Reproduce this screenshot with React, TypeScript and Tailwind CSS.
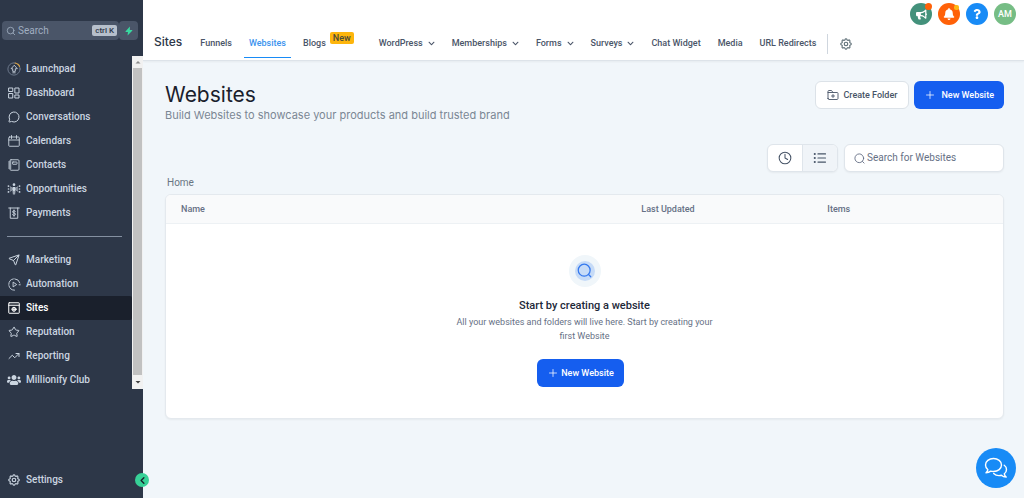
import type { ReactNode } from "react";
import {
  ChevronLeft,
  MessageCircle,
  Plus,
  Search,
  Send,
  Star,
  TrendingUp,
} from "lucide-react";
import { FaBell, FaBullhorn, FaChevronDown, FaQuestion, FaUsers } from "react-icons/fa";
import { HiOutlineCog } from "react-icons/hi";

type SideItem = {
  label: string;
  icon: ReactNode;
  active?: boolean;
};

type TopItem = {
  label: string;
  menu?: boolean;
  active?: boolean;
  badge?: string;
};

const lineIcon = {
  viewBox: "0 0 24 24",
  fill: "none",
  stroke: "currentColor",
  strokeLinecap: "round",
  strokeLinejoin: "round",
} as const;

const primaryItems: SideItem[] = [
  { label: "Launchpad", icon: <LaunchpadIcon /> },
  { label: "Dashboard", icon: <DashboardIcon /> },
  {
    label: "Conversations",
    icon: <MessageCircle className="size-3" strokeWidth={2} />,
  },
  { label: "Calendars", icon: <CalendarIcon /> },
  { label: "Contacts", icon: <ContactsIcon /> },
  { label: "Opportunities", icon: <OpportunitiesIcon /> },
  { label: "Payments", icon: <PaymentsIcon /> },
];

const secondaryItems: SideItem[] = [
  { label: "Marketing", icon: <Send className="size-3" strokeWidth={2} /> },
  { label: "Automation", icon: <AutomationIcon /> },
  { label: "Sites", icon: <SitesIcon />, active: true },
  { label: "Reputation", icon: <Star className="size-3" strokeWidth={2} /> },
  { label: "Reporting", icon: <TrendingUp className="size-3" strokeWidth={2} /> },
  { label: "Millionify Club", icon: <FaUsers className="size-[14px]" /> },
];

const topItems: TopItem[] = [
  { label: "Funnels" },
  { label: "Websites", active: true },
  { label: "Blogs", badge: "New" },
  { label: "WordPress", menu: true },
  { label: "Memberships", menu: true },
  { label: "Forms", menu: true },
  { label: "Surveys", menu: true },
  { label: "Chat Widget" },
  { label: "Media" },
  { label: "URL Redirects" },
];

export default function App() {
  return (
    <div className="flex min-h-screen bg-[#f1f6fa] font-['Roboto',sans-serif] text-[9px] leading-[14px]">
      <Sidebar />
      <div className="flex min-w-0 flex-1 flex-col">
        <Header />
        <WebsitesPage />
      </div>
      <button
        type="button"
        aria-label="Open chat"
        className="fixed right-2 bottom-[10px] flex size-10 items-center justify-center rounded-full bg-[#188bf6] text-white"
      >
        <ChatIcon />
      </button>
    </div>
  );
}

function Sidebar() {
  return (
    <aside className="relative flex w-[143px] shrink-0 flex-col bg-[#2d3748] text-[#cbd5e0]">
      <div className="flex pt-[21px] pr-[5px] pl-[2px]">
        <label className="flex h-[19px] min-w-0 flex-1 items-center gap-[2px] rounded-sm bg-[#4a5568] pr-[2px] pl-1">
          <Search className="size-[10px] shrink-0 text-[#a0aec0]" />
          <input
            type="text"
            placeholder="Search"
            aria-label="Search"
            className="w-full min-w-0 bg-transparent text-[10px] outline-none placeholder:text-[#a0aec0]"
          />
          <kbd className="shrink-0 rounded-xs bg-[#b6bfcb] px-[3px] font-['Roboto',sans-serif] text-[8px] leading-[11px] font-medium text-[#2d3748]">
            ctrl K
          </kbd>
        </label>
        <button
          type="button"
          aria-label="Quick actions"
          className="flex h-[19px] w-[19px] items-center justify-center rounded-sm bg-[#4a5568] text-[#38d9a0]"
        >
          <svg viewBox="0 0 10 12" className="h-[10px] w-2" fill="currentColor">
            <path d="M6.2 0.5 0.8 6.4c-.4.4-.1.9.4.9h2.5l-.5 4.2 5.8-5.8c.4-.4.1-1-.4-1H6l.2-4.2Z" />
          </svg>
        </button>
      </div>

      <div className="mt-4 flex">
        <nav aria-label="Main" className="min-w-0 flex-1 pt-px">
          <SideList items={primaryItems} />
          <hr className="mt-[11px] mr-[10px] mb-[11px] ml-[7px] border-[#8490a1]" />
          <SideList items={secondaryItems} />
        </nav>
        <ScrollBar />
      </div>

      <a href="#settings" className="mt-auto mb-1 flex h-7 items-center gap-[5px] pl-[7px] text-[10px] font-medium">
        <HiOutlineCog className="size-[14px]" />
        Settings
      </a>
      <button
        type="button"
        aria-label="Collapse sidebar"
        className="absolute right-[-6px] bottom-[11px] flex size-[14px] items-center justify-center rounded-full bg-[#37d197] text-[#1a202c]"
      >
        <ChevronLeft className="size-[11px]" strokeWidth={3} />
      </button>
    </aside>
  );
}

function SideList({ items }: { items: SideItem[] }) {
  return (
    <ul className="text-[10px] font-medium">
      {items.map((item) => (
        <li key={item.label}>
          <a
            href={`#${item.label.toLowerCase()}`}
            className={
              item.active
                ? "flex h-6 items-center gap-[5px] rounded-r-xs bg-[#1a202c] pl-[7px] text-white"
                : "flex h-6 items-center gap-[5px] pl-[7px]"
            }
          >
            <span className="flex w-[14px] shrink-0 justify-center">{item.icon}</span>
            {item.label}
          </a>
        </li>
      ))}
    </ul>
  );
}

function ScrollBar() {
  return (
    <div
      aria-hidden="true"
      className="mb-[3px] flex w-[11px] shrink-0 flex-col items-center bg-[#f1f1f1]"
    >
      <svg viewBox="0 0 10 10" className="my-px size-[10px]">
        <path d="M2.5 6.5 5 4l2.5 2.5Z" fill="#8a8a8a" />
      </svg>
      <div className="w-[9px] flex-1 bg-[#c1c1c1]" />
      <svg viewBox="0 0 10 10" className="my-[2px] size-[10px]">
        <path d="M2.5 4 5 6.5 7.5 4Z" fill="#404040" />
      </svg>
    </div>
  );
}

function Header() {
  return (
    <header className="border-b border-[#dde3e9] bg-white shadow-xs">
      <div className="flex h-7 items-end justify-end gap-[6px] pr-2 pb-[3px]">
        <button
          type="button"
          aria-label="Announcements"
          className="relative flex size-[22px] items-center justify-center rounded-full bg-[#43917b] text-white"
        >
          <FaBullhorn className="size-[11px]" />
          <span className="absolute top-0 right-0 size-[7px] rounded-full bg-[#ff6108]" />
        </button>
        <button
          type="button"
          aria-label="Notifications"
          className="relative flex size-[22px] items-center justify-center rounded-full bg-[#ff6108] text-white"
        >
          <FaBell className="size-3" />
          <span className="absolute top-[2px] right-[1px] size-[5px] rounded-xs bg-[#fdb715]" />
        </button>
        <button
          type="button"
          aria-label="Help"
          className="flex size-[22px] items-center justify-center rounded-full bg-[#188bf6] text-white"
        >
          <FaQuestion className="size-[10px]" />
        </button>
        <button
          type="button"
          className="flex size-[22px] items-center justify-center rounded-full bg-[#76bd85] font-medium text-white"
        >
          AM
        </button>
      </div>

      <div className="flex h-8 items-center pl-[11px] whitespace-nowrap">
        <span className="mr-[13px] pb-1 font-['Inter',sans-serif] text-xs font-medium text-[#2d3748]">
          Sites
        </span>
        <nav aria-label="Sites" className="flex h-full items-center gap-[7px] pb-[2px]">
          {topItems.map((item) => (
            <TopLink key={item.label} item={item} />
          ))}
        </nav>
        <button
          type="button"
          aria-label="Site settings"
          className="ml-[6px] flex h-5 items-center border-l border-[#cfd6de] pl-[11px] text-[#607179]"
        >
          <HiOutlineCog className="size-[14px]" />
        </button>
      </div>
    </header>
  );
}

function TopLink({ item }: { item: TopItem }) {
  return (
    <a
      href={`#${item.label.toLowerCase()}`}
      aria-current={item.active ? "page" : undefined}
      className={
        item.active
          ? "flex h-full items-center border-b border-[#188bf6] px-[5px] pt-px font-medium text-[#3b93ee]"
          : "flex h-full items-center px-[5px] font-medium text-[#4a5568]"
      }
    >
      {item.label}
      {item.badge && (
        <span className="mr-2 mb-[11px] ml-1 rounded-xs bg-[#fdb50c] px-[3px] leading-3 text-[#4a4a3a]">
          {item.badge}
        </span>
      )}
      {item.menu && <FaChevronDown className="ml-[5px] size-[7px]" />}
    </a>
  );
}

function WebsitesPage() {
  return (
    <main className="px-5 pt-5 pb-16 pl-[22px]">
      <div className="flex items-start justify-between">
        <div className="font-['Inter',sans-serif]">
          <h1 className="text-[21px] leading-[27px] text-[#1a202c]">Websites</h1>
          <p className="text-[11px] leading-[14px] text-[#7b8794]">
            Build Websites to showcase your products and build trusted brand
          </p>
        </div>
        <div className="flex gap-[5px]">
          <button
            type="button"
            className="flex h-7 items-center gap-1 rounded-md border border-[#dce2e8] bg-white px-[11px] font-medium text-[#475467]"
          >
            <FolderPlusIcon />
            Create Folder
          </button>
          <button
            type="button"
            className="flex h-7 items-center gap-[5px] rounded-md bg-[#155eef] px-[10px] font-medium text-white"
          >
            <Plus className="size-3" strokeWidth={1.5} />
            New Website
          </button>
        </div>
      </div>

      <div className="mt-[22px] flex justify-end gap-[6px]">
        <div className="flex h-7 overflow-hidden rounded-md border border-[#dfe5eb] bg-white text-[#475467] shadow-xs">
          <button type="button" aria-label="Recent" className="flex w-[34px] items-center justify-center">
            <ClockIcon />
          </button>
          <button
            type="button"
            aria-label="List view"
            className="flex w-[35px] items-center justify-center border-l border-[#dfe5eb] bg-[#f0f4f8]"
          >
            <ListIcon />
          </button>
        </div>
        <label className="flex h-7 w-40 items-center gap-[2px] rounded-md border border-[#dfe5eb] bg-white px-[9px] shadow-xs">
          <LoupeIcon className="size-[11px] shrink-0 text-[#667085]" />
          <input
            type="text"
            placeholder="Search for Websites"
            aria-label="Search for Websites"
            className="w-full min-w-0 bg-transparent text-[10px] outline-none placeholder:text-[#667085]"
          />
        </label>
      </div>

      <a href="#home" className="mt-1 ml-[2px] block w-fit text-[10px] text-[#697582]">
        Home
      </a>

      <section className="mt-1 overflow-hidden rounded-md border border-[#e4e9ee] bg-white shadow-xs">
        <table className="w-full table-fixed text-left text-[#667085]">
          <thead className="bg-[#f9fafb]">
            <tr className="h-7 border-b border-[#edf1f4]">
              <th scope="col" className="w-[55%] pl-[15px] font-medium">
                Name
              </th>
              <th scope="col" className="w-2/9 pl-[15px] font-medium">
                Last Updated
              </th>
              <th scope="col" className="pl-[15px] font-medium">
                Items
              </th>
            </tr>
          </thead>
        </table>
        <div className="flex flex-col items-center pt-[31px] pb-[31px] text-center">
          <span className="flex size-8 items-center justify-center rounded-full bg-[#f0f6fa]">
            <span className="flex size-5 items-center justify-center rounded-full bg-[#c6dbf7]">
              <LoupeIcon className="size-[15px] text-[#3478ee]" />
            </span>
          </span>
          <h2 className="mt-3 text-[11px] leading-[14px] font-medium text-[#1d2939]">
            Start by creating a website
          </h2>
          <p className="mt-[2px] w-[268px] text-[#667085]">
            All your websites and folders will live here. Start by creating your first Website
          </p>
          <button
            type="button"
            className="mt-4 mr-2 flex h-7 items-center gap-[2px] rounded-md bg-[#155eef] px-[10px] font-medium text-white"
          >
            <Plus className="size-3" strokeWidth={1.5} />
            New Website
          </button>
        </div>
      </section>
    </main>
  );
}

function LaunchpadIcon() {
  return (
    <svg {...lineIcon} className="size-[14px]" strokeWidth={1.5}>
      <circle cx="12" cy="12" r="10.5" stroke="#748093" />
      <path d="M14 1.7A10.5 10.5 0 0 1 21.5 7.5" stroke="#d69e3e" strokeWidth={2} />
      <path d="m12 6-5 5.5h2.7V16h4.6v-4.5H17Z" />
      <path d="M10 18.5h4" />
    </svg>
  );
}

function DashboardIcon() {
  return (
    <svg {...lineIcon} className="size-3" strokeWidth={2}>
      <rect x="2" y="2" width="7.5" height="7" />
      <rect x="14.5" y="2" width="7.5" height="10" />
      <rect x="2" y="13" width="7.5" height="9" />
      <rect x="14.5" y="16" width="7.5" height="6" />
    </svg>
  );
}

function CalendarIcon() {
  return (
    <svg {...lineIcon} className="size-3" strokeWidth={1.8}>
      <rect x="1.5" y="4" width="21" height="18.5" rx="1.5" />
      <path d="M1.5 10h21M7 1v6M17 1v6" />
    </svg>
  );
}

function ContactsIcon() {
  return (
    <svg {...lineIcon} className="size-3" strokeWidth={1.8}>
      <rect x="4" y="1.5" width="18" height="21" rx="2" />
      <rect x="9" y="6" width="9" height="4.5" rx="1" />
      <path d="M1 6h5M1 10h5M1 14h5M1 18h5" />
    </svg>
  );
}

function OpportunitiesIcon() {
  return (
    <svg {...lineIcon} className="size-[14px]" strokeWidth={1.5}>
      <g fill="currentColor" stroke="none">
        <circle cx="12" cy="4.5" r="2.3" />
        <path d="M9.5 8.5h5V14l-.7 7.500h-1.300v-6h-1v6h-1.300L9.500 14Z" />
        <circle cx="2.500" cy="7" r="1.500" />
        <circle cx="21.500" cy="7" r="1.500" />
        <circle cx="2.500" cy="12" r="1.300" />
        <circle cx="21.500" cy="12" r="1.300" />
        <circle cx="2.500" cy="17" r="1.500" />
        <circle cx="21.500" cy="17" r="1.500" />
      </g>
      <path d="M5.500 12h13" strokeWidth={2} />
      <path d="m5.500 8.500 2 1M18.500 8.500l-2 1M5.500 15.500l2-1M18.500 15.500l-2-1" />
    </svg>
  );
}

function PaymentsIcon() {
  return (
    <svg {...lineIcon} className="size-3" strokeWidth={1.9}>
      <path d="M1.5 2h21M4.5 2v20.5h15V2" />
      <path d="M14.8 8.7c-.6-.8-1.6-1.2-2.8-1.2-1.7 0-2.9.8-2.9 2.2 0 3.2 6 1.4 6 4.7 0 1.4-1.3 2.3-3.1 2.3-1.4 0-2.5-.5-3.1-1.4M12 6v12.5" />
    </svg>
  );
}

function AutomationIcon() {
  return (
    <svg {...lineIcon} className="size-[13px]" strokeWidth={1.7}>
      <path d="M12 22.5A10.5 10.5 0 1 1 22 9" strokeDasharray="14 2.5" />
      <path d="m10 8 6 4-6 4Z" />
      <path d="M22.5 12.5h-2" />
    </svg>
  );
}

function SitesIcon() {
  return (
    <svg {...lineIcon} className="size-3" strokeWidth={2}>
      <rect x="1.5" y="1.5" width="21" height="21" rx="1" />
      <path d="M1.5 6.5h21" />
      <circle cx="12" cy="14.5" r="4" />
      <path d="M8 14.5h8M12 11v7" />
    </svg>
  );
}

function FolderPlusIcon() {
  return (
    <svg {...lineIcon} className="size-3" strokeWidth={1.8}>
      <path d="M2 19V4.5C2 3.7 2.7 3 3.5 3H9l3 4h8.5c.8 0 1.5.7 1.5 1.5V19c0 1.1-.9 2-2 2H4c-1.1 0-2-.9-2-2Z" />
      <path d="M2 7h10M12 11v6M9 14h6" />
    </svg>
  );
}

function ClockIcon() {
  return (
    <svg {...lineIcon} className="size-[14px]" strokeWidth={1.8}>
      <circle cx="12" cy="12" r="10" />
      <path d="M12 5.5V12l4.5 2.5" />
    </svg>
  );
}

function ListIcon() {
  return (
    <svg {...lineIcon} className="size-[14px]" strokeWidth={2}>
      <path d="M8.5 5h13M8.5 12h13M8.5 19h13" />
      <path d="M3 5h.1M3 12h.1M3 19h.1" strokeWidth={3.5} />
    </svg>
  );
}

function LoupeIcon({ className }: { className: string }) {
  return (
    <svg {...lineIcon} className={className} strokeWidth={2}>
      <circle cx="11.5" cy="11.5" r="9.5" />
      <path d="m18.5 18.5 3.5 3.5" />
    </svg>
  );
}

function ChatIcon() {
  return (
    <svg {...lineIcon} className="size-6" strokeWidth={1.4}>
      <path d="M9.5 2.5C5 2.5 1.5 5.4 1.5 9c0 1.9.9 3.5 2.4 4.7-.2 1.2-.9 2.2-1.900 3 1.900 0 3.500-.6 4.700-1.600.9.300 1.800.400 2.800.400 4.500 0 8-2.900 8-6.500s-3.500-6.500-8-6.500Z" />
      <path d="M20.200 9.200c1.400 1 2.300 2.500 2.300 4.200 0 1.800-.8 3.300-2.200 4.400.2 1.300.9 2.300 1.900 3.200-2 0-3.600-.6-4.800-1.700-2.900.700-6-.1-7.700-1.800" />
    </svg>
  );
}
